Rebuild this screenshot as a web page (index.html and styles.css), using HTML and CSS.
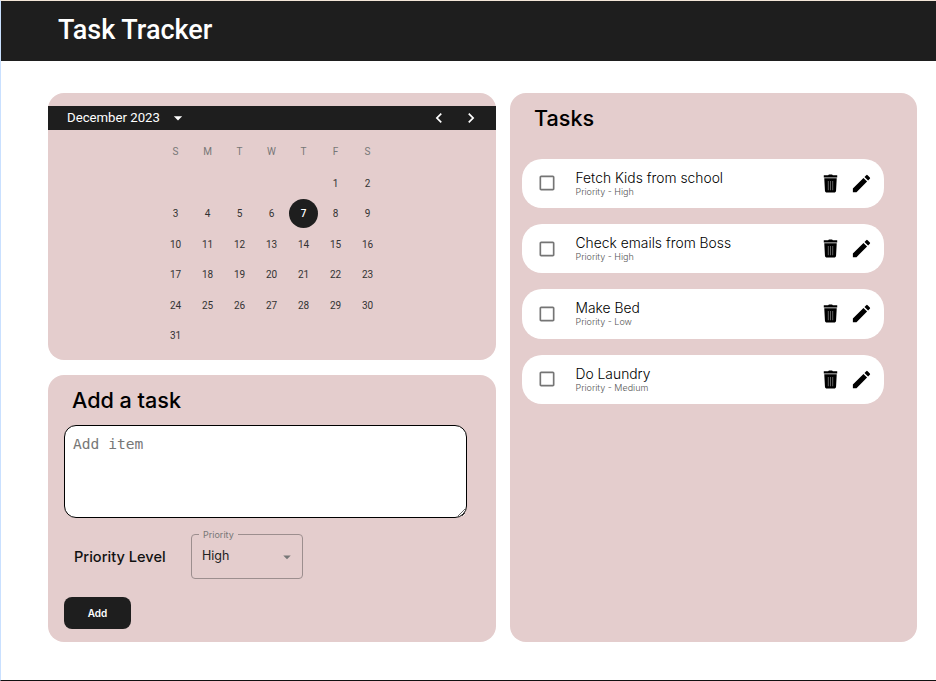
FILE: index.html
```html
<!DOCTYPE html>
<html lang="en">
<head>
    <meta charset="UTF-8">
    <title>Task Tracker</title>
    <link rel="stylesheet" href="styles.css">
</head>
<body>
    <div class="page">
        <header class="topbar">
            <h1>Task Tracker</h1>
        </header>
        <main class="content">
            <div class="left-col">
                <section class="card calendar">
                    <div class="cal-head">
                        <span class="cal-month">December 2023</span>
                        <svg class="cal-drop" viewBox="0 0 24 24"><path d="M7 10l5 5 5-5z"/></svg>
                        <div class="cal-nav">
                            <svg viewBox="0 0 24 24"><path d="M15.41 7.41 14 6l-6 6 6 6 1.41-1.41L10.83 12z"/></svg>
                            <svg viewBox="0 0 24 24"><path d="M10 6 8.59 7.41 13.17 12l-4.58 4.59L10 18l6-6z"/></svg>
                        </div>
                    </div>
                    <div class="cal-grid">
                        <span class="dow">S</span><span class="dow">M</span><span class="dow">T</span><span class="dow">W</span><span class="dow">T</span><span class="dow">F</span><span class="dow">S</span>
                        <span></span><span></span><span></span><span></span><span></span><span>1</span><span>2</span>
                        <span>3</span><span>4</span><span>5</span><span>6</span><span class="today">7</span><span>8</span><span>9</span>
                        <span>10</span><span>11</span><span>12</span><span>13</span><span>14</span><span>15</span><span>16</span>
                        <span>17</span><span>18</span><span>19</span><span>20</span><span>21</span><span>22</span><span>23</span>
                        <span>24</span><span>25</span><span>26</span><span>27</span><span>28</span><span>29</span><span>30</span>
                        <span>31</span>
                    </div>
                </section>
                <section class="card add-task">
                    <h2>Add a task</h2>
                    <textarea class="add-input" placeholder="Add item"></textarea>
                    <div class="priority-row">
                        <span class="priority-label">Priority Level</span>
                        <fieldset class="priority-field">
                            <legend>Priority</legend>
                            <span class="priority-value">High</span>
                            <svg viewBox="0 0 24 24"><path d="M7 10l5 5 5-5z"/></svg>
                        </fieldset>
                    </div>
                    <button class="add-btn" type="button">Add</button>
                </section>
            </div>
            <section class="card tasks">
                <h2>Tasks</h2>
                <ul class="task-list">
                    <li class="task">
                        <svg class="check" viewBox="0 0 24 24"><path d="M19 5v14H5V5h14m0-2H5c-1.1 0-2 .9-2 2v14c0 1.1.9 2 2 2h14c1.1 0 2-.9 2-2V5c0-1.1-.9-2-2-2z"/></svg>
                        <div class="task-text">
                            <div class="task-title">Fetch Kids from school</div>
                            <div class="task-sub">Priority - High</div>
                        </div>
                        <svg class="trash" viewBox="0 0 24 24"><path d="M9.500 3.500 10.400 2.500h3.200l.9 1H19v2.200H5V3.500zM5.500 6.400h13l-.7 13.100c-.06 1.100-.9 2-2 2H8.200c-1.100 0-1.940-.9-2-2z"/><path class="slots" d="M9.200 9.500h1v9.500h-1zM11.500 9.500h1v9.500h-1zM13.800 9.500h1v9.500h-1z"/></svg>
                        <svg class="edit" viewBox="0 0 24 24"><path d="M3 17.250V21h3.750L17.810 9.940l-3.750-3.750L3 17.250zM20.710 7.040c.39-.39.39-1.020 0-1.410l-2.340-2.340a.9959.9959 0 0 0-1.410 0l-1.830 1.830 3.750 3.750 1.830-1.830z"/></svg>
                    </li>
                    <li class="task">
                        <svg class="check" viewBox="0 0 24 24"><path d="M19 5v14H5V5h14m0-2H5c-1.1 0-2 .9-2 2v14c0 1.1.9 2 2 2h14c1.1 0 2-.9 2-2V5c0-1.1-.9-2-2-2z"/></svg>
                        <div class="task-text">
                            <div class="task-title">Check emails from Boss</div>
                            <div class="task-sub">Priority - High</div>
                        </div>
                        <svg class="trash" viewBox="0 0 24 24"><path d="M9.500 3.500 10.400 2.500h3.200l.9 1H19v2.200H5V3.500zM5.500 6.400h13l-.7 13.100c-.06 1.100-.9 2-2 2H8.200c-1.100 0-1.940-.9-2-2z"/><path class="slots" d="M9.200 9.500h1v9.500h-1zM11.500 9.500h1v9.500h-1zM13.800 9.500h1v9.500h-1z"/></svg>
                        <svg class="edit" viewBox="0 0 24 24"><path d="M3 17.250V21h3.750L17.810 9.940l-3.750-3.750L3 17.250zM20.710 7.040c.39-.39.39-1.020 0-1.410l-2.340-2.340a.9959.9959 0 0 0-1.410 0l-1.830 1.830 3.750 3.750 1.830-1.830z"/></svg>
                    </li>
                    <li class="task">
                        <svg class="check" viewBox="0 0 24 24"><path d="M19 5v14H5V5h14m0-2H5c-1.1 0-2 .9-2 2v14c0 1.1.9 2 2 2h14c1.1 0 2-.9 2-2V5c0-1.1-.9-2-2-2z"/></svg>
                        <div class="task-text">
                            <div class="task-title">Make Bed</div>
                            <div class="task-sub">Priority - Low</div>
                        </div>
                        <svg class="trash" viewBox="0 0 24 24"><path d="M9.500 3.500 10.400 2.500h3.200l.9 1H19v2.200H5V3.500zM5.500 6.400h13l-.7 13.100c-.06 1.100-.9 2-2 2H8.200c-1.100 0-1.940-.9-2-2z"/><path class="slots" d="M9.200 9.500h1v9.500h-1zM11.500 9.500h1v9.500h-1zM13.800 9.500h1v9.500h-1z"/></svg>
                        <svg class="edit" viewBox="0 0 24 24"><path d="M3 17.250V21h3.750L17.810 9.940l-3.750-3.750L3 17.250zM20.710 7.040c.39-.39.39-1.020 0-1.410l-2.340-2.340a.9959.9959 0 0 0-1.410 0l-1.830 1.830 3.750 3.750 1.830-1.830z"/></svg>
                    </li>
                    <li class="task">
                        <svg class="check" viewBox="0 0 24 24"><path d="M19 5v14H5V5h14m0-2H5c-1.1 0-2 .9-2 2v14c0 1.1.9 2 2 2h14c1.1 0 2-.9 2-2V5c0-1.1-.9-2-2-2z"/></svg>
                        <div class="task-text">
                            <div class="task-title">Do Laundry</div>
                            <div class="task-sub">Priority - Medium</div>
                        </div>
                        <svg class="trash" viewBox="0 0 24 24"><path d="M9.500 3.500 10.400 2.500h3.200l.9 1H19v2.200H5V3.500zM5.500 6.400h13l-.7 13.100c-.06 1.100-.9 2-2 2H8.200c-1.100 0-1.940-.9-2-2z"/><path class="slots" d="M9.200 9.500h1v9.500h-1zM11.500 9.500h1v9.500h-1zM13.800 9.500h1v9.500h-1z"/></svg>
                        <svg class="edit" viewBox="0 0 24 24"><path d="M3 17.250V21h3.750L17.810 9.940l-3.750-3.750L3 17.250zM20.710 7.040c.39-.39.39-1.020 0-1.410l-2.340-2.340a.9959.9959 0 0 0-1.410 0l-1.830 1.830 3.750 3.750 1.830-1.830z"/></svg>
                    </li>
                </ul>
            </section>
        </main>
    </div>
</body>
</html>
```

FILE: styles.css
```css
* {
    box-sizing: border-box;
}

html, body {
    margin: 0;
    height: 681px;
    overflow: hidden;
}

body {
    font-family: Inter, Arial, sans-serif;
    background-color: #fff;
}

.page {
    height: 681px;
    border-top: 1px solid #f3e6d8;
    border-left: 1px solid #c9e0ff;
    border-bottom: 1px solid #111;
}

.topbar {
    height: 60px;
    background-color: #1e1e1e;
    color: #fff;
    padding: 0 0 2px 57px;
    display: flex;
    align-items: center;
}

.topbar h1 {
    margin: 0;
    font-family: Roboto, Arial, sans-serif;
    font-size: 27px;
    font-weight: 500;
}

.content {
    display: flex;
    gap: 14px;
    padding: 32px 0 0 47px;
}

.left-col {
    width: 448px;
    display: flex;
    flex-direction: column;
    gap: 15px;
}

.card {
    background-color: #e4cdcd;
    border-radius: 16px;
}

.calendar {
    height: 267px;
    padding-top: 13px;
    font-family: Roboto, Arial, sans-serif;
}

.cal-head {
    height: 24px;
    background-color: #1e1e1e;
    color: #fff;
    display: flex;
    align-items: center;
    padding-left: 19px;
    font-size: 13.2px;
}

.cal-month {
    padding-bottom: 1px;
}

.cal-drop {
    width: 20px;
    height: 20px;
    margin-left: 8px;
    fill: #fff;
}

.cal-nav {
    margin-left: auto;
    margin-right: 15px;
    display: flex;
    gap: 12px;
}

.cal-nav svg {
    width: 20px;
    height: 20px;
    fill: #fff;
}

.cal-grid {
    display: grid;
    grid-template-columns: repeat(7, 32px);
    grid-template-rows: 33px;
    grid-auto-rows: 30.4px;
    justify-content: center;
    justify-items: center;
    align-items: center;
    margin-top: 5.3px;
    padding-right: 1px;
    font-size: 10px;
    color: #333;
}

.dow {
    color: #777;
}

.cal-grid span {
    width: 29px;
    height: 29px;
    display: flex;
    align-items: center;
    justify-content: center;
    border-radius: 50%;
}

.cal-grid .today {
    background-color: #1e1e1e;
    color: #fff;
    font-weight: 500;
}

.add-task {
    height: 267px;
    padding: 10px 0 0 16px;
}

.add-task h2,
.tasks h2 {
    margin: 0;
    font-size: 21.6px;
    font-weight: 500;
    line-height: 30px;
    color: #000;
}

.add-task h2 {
    padding-left: 8px;
}

.add-input {
    display: block;
    width: 403px;
    height: 93px;
    margin-top: 10px;
    padding: 9px 8px;
    border: 1px solid #000;
    border-radius: 12px;
    background-color: #fff;
    font-family: "DejaVu Sans Mono", monospace;
    font-size: 14.6px;
    outline: none;
}

.add-input::placeholder {
    color: #777;
}

.priority-row {
    display: flex;
    align-items: center;
    margin-top: 11px;
    padding-left: 10px;
}

.priority-label {
    width: 117px;
    padding-top: 6px;
    font-size: 14.6px;
    font-weight: 500;
    color: #111;
}

.priority-field {
    width: 112px;
    height: 50px;
    margin: 0;
    padding: 0 6px 0 10px;
    border: 1px solid #9c8e8e;
    border-radius: 4px;
    display: flex;
    align-items: center;
    justify-content: space-between;
}

.priority-field legend {
    margin-left: -3px;
    padding: 0 4px;
    font-size: 9px;
    color: #777;
}

.priority-value {
    font-size: 12.5px;
    color: #222;
    padding-bottom: 8px;
}

.priority-field svg {
    width: 18px;
    height: 18px;
    margin-bottom: 4px;
    fill: #777;
}

.add-btn {
    display: block;
    width: 67px;
    height: 32px;
    margin-top: 18px;
    border: none;
    border-radius: 8px;
    background-color: #1e1e1e;
    color: #fff;
    font-family: Inter, Arial, sans-serif;
    font-size: 10px;
    font-weight: 600;
    cursor: pointer;
}

.tasks {
    width: 407px;
    height: 549px;
    padding: 10px 12px 0;
}

.tasks h2 {
    padding-left: 12px;
}

.task-list {
    list-style: none;
    margin: 25.7px 0 0;
    padding: 0;
    width: 362px;
    display: flex;
    flex-direction: column;
    gap: 16px;
}

.task {
    height: 49.3px;
    background-color: #fff;
    border-radius: 20px;
    display: flex;
    align-items: center;
    padding: 0 11.5px 0 15px;
}

.check {
    width: 20px;
    height: 20px;
    fill: #757575;
    flex: none;
}

.task-text {
    margin-left: 18.5px;
    flex: 1;
}

.task-title {
    font-size: 13.85px;
    font-weight: 300;
    line-height: 16px;
    color: #000;
}

.task-sub {
    font-size: 9px;
    font-weight: 300;
    line-height: 11px;
    color: #555;
}

.trash {
    width: 23px;
    height: 23px;
    fill: #000;
    margin-right: 7.5px;
}

.trash .slots {
    fill: #666;
}

.edit {
    width: 23px;
    height: 23px;
    fill: #000;
}
```
